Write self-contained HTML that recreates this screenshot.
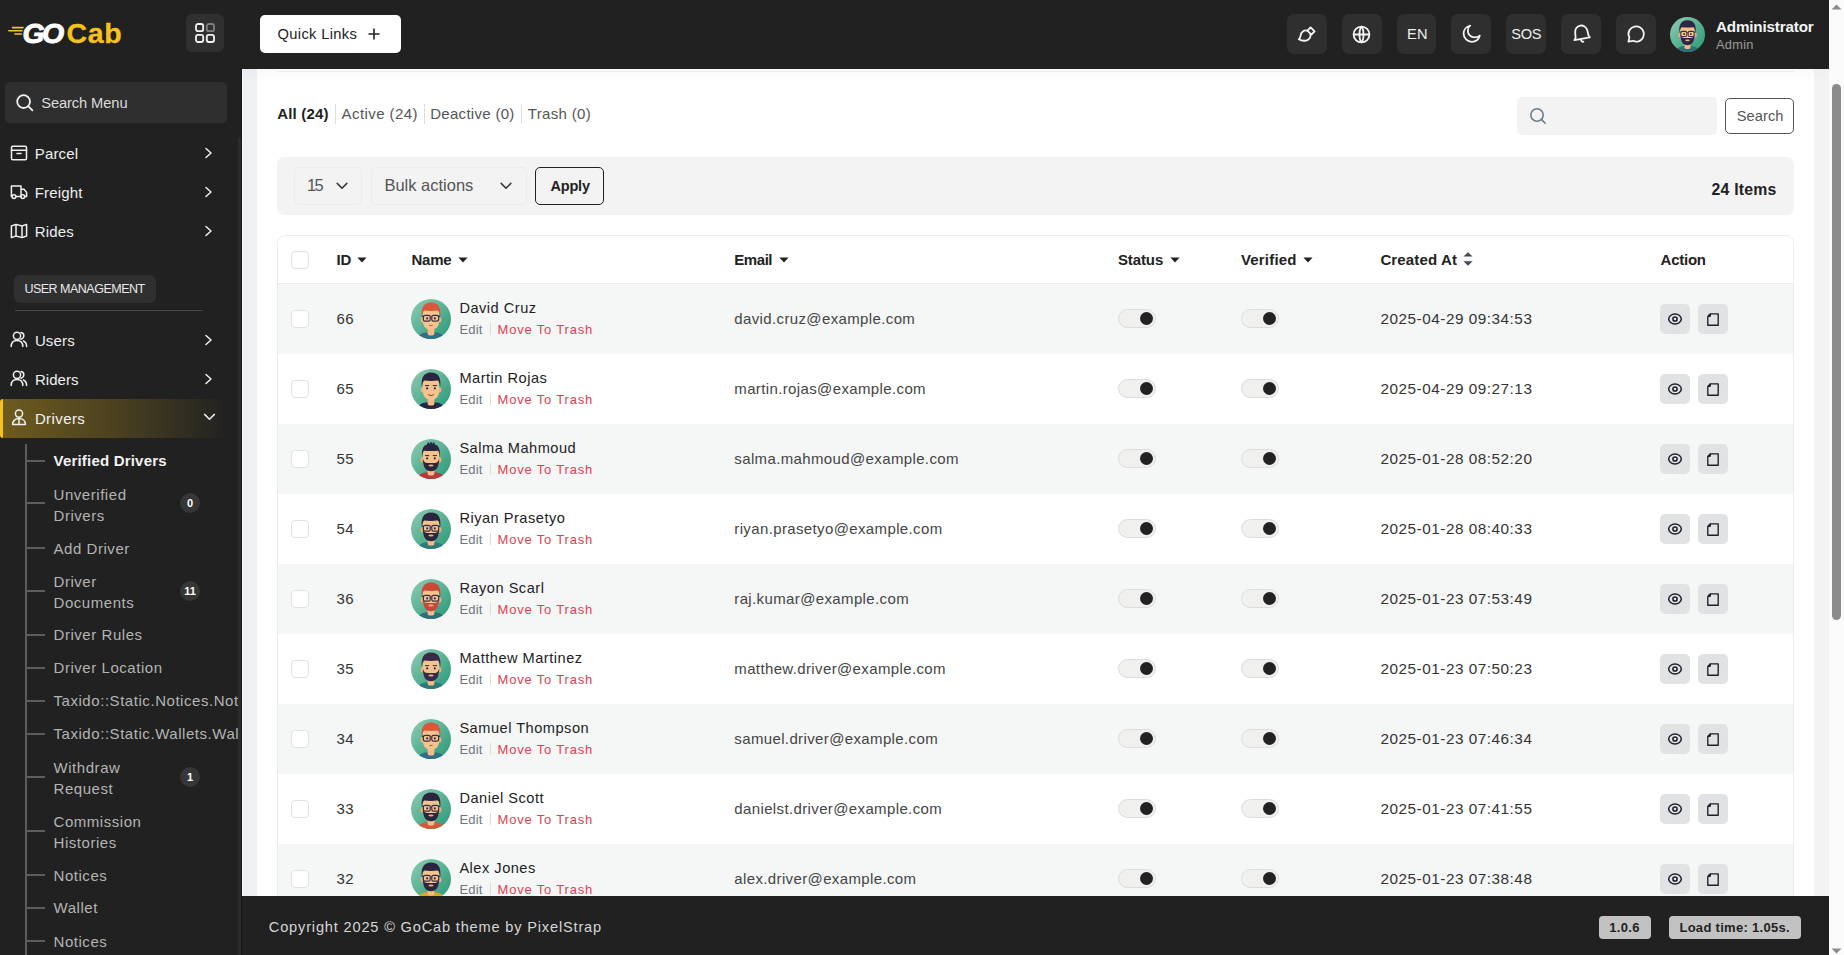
<!DOCTYPE html>
<html><head><meta charset="utf-8"><title>Drivers</title>
<style>
html,body{margin:0;padding:0;}
body{width:1844px;height:955px;overflow:hidden;position:relative;background:#fbfbfb;font-family:"Liberation Sans",sans-serif;}
.a{position:absolute;box-sizing:border-box;}
.t{position:absolute;white-space:nowrap;}
svg.a{overflow:visible;}
</style></head><body>

<div class="a" style="left:242px;top:69px;width:1587px;height:827px;background:#eef0f4"></div>
<div class="a" style="left:1814px;top:69px;width:15px;height:827px;background:#f3f3f3"></div>
<div class="a" style="left:257px;top:69px;width:1557px;height:827px;background:#ffffff"></div>
<div class="a" style="left:277px;top:71px;width:1517px;height:1px;background:#efefef"></div>
<div class="a" style="left:242px;top:69px;width:1px;height:827px;background:#f8f9fb"></div>
<div class="a" style="left:0px;top:0px;width:1829px;height:69px;background:#212121;box-shadow:0 3px 14px rgba(40,40,60,0.04)"></div>
<svg class="a" style="left:8px;top:22px;" width="120" height="24" viewBox="0 0 120 24" fill="none">
<g stroke="#f6c31c" stroke-width="1.6" stroke-linecap="round">
<line x1="4.5" y1="5.6" x2="15" y2="5.6"/><line x1="0.8" y1="8.8" x2="14" y2="8.8"/><line x1="7" y1="12" x2="13.5" y2="12"/>
</g></svg>
<div class="t" style="left:22.5px;top:18.78px;font-size:28.5px;line-height:28.5px;font-weight:700;color:#ffffff;letter-spacing:-2.6px;-webkit-text-stroke:0.9px #fff;"><i>GO</i></div>
<div class="t" style="left:66.5px;top:19.28px;font-size:28.5px;line-height:28.5px;font-weight:700;color:#f6c31c;letter-spacing:0.6px;-webkit-text-stroke:0.3px #f6c31c;">Cab</div>
<div class="a" style="left:186px;top:14px;width:38px;height:38px;background:#303030;border-radius:6px"></div>
<svg class="a" style="left:195px;top:23px;" width="20" height="20" viewBox="0 0 20 20" fill="none">
<rect x="1" y="1" width="7.2" height="7.2" rx="2" stroke="#f2f2f2" stroke-width="1.8"/>
<rect x="11.8" y="1" width="7.2" height="7.2" rx="2" stroke="#808080" stroke-width="1.8"/>
<rect x="1" y="11.8" width="7.2" height="7.2" rx="2" stroke="#f2f2f2" stroke-width="1.8"/>
<rect x="11.8" y="11.8" width="7.2" height="7.2" rx="2" stroke="#f2f2f2" stroke-width="1.8"/></svg>
<div class="a" style="left:260px;top:15px;width:141px;height:38px;background:#ffffff;border-radius:5px"></div>
<div class="t" style="left:277.5px;top:27.28px;font-size:14.7px;line-height:14.7px;font-weight:400;color:#222;letter-spacing:0.35px;">Quick Links</div>
<svg class="a" style="left:368px;top:28px;" width="12" height="12" viewBox="0 0 12 12" fill="none"><path d="M6 0.5V11.5M0.5 6H11.5" stroke="#222" stroke-width="1.6"/></svg>
<div class="a" style="left:1287px;top:14px;width:40px;height:40px;background:#2f2f2f;border-radius:7px"></div>
<div class="a" style="left:1342px;top:14px;width:40px;height:40px;background:#2f2f2f;border-radius:7px"></div>
<div class="a" style="left:1397px;top:14px;width:39px;height:40px;background:#2f2f2f;border-radius:7px"></div>
<div class="a" style="left:1451px;top:14px;width:40px;height:40px;background:#2f2f2f;border-radius:7px"></div>
<div class="a" style="left:1506px;top:14px;width:40px;height:40px;background:#2f2f2f;border-radius:7px"></div>
<div class="a" style="left:1561px;top:14px;width:40px;height:40px;background:#2f2f2f;border-radius:7px"></div>
<div class="a" style="left:1616px;top:14px;width:40px;height:40px;background:#2f2f2f;border-radius:7px"></div>
<svg class="a" style="left:1298px;top:25px;" width="20" height="18" viewBox="0 0 20 18" fill="none"><path d="M12.6 2.4 L16.6 6.4 L13.4 9.6 L9.4 5.6 Z" stroke="#f4f4f4" stroke-width="1.8" stroke-linecap="round" stroke-linejoin="round"/>
<path d="M9.6 5.8 C6 4.6 2.8 7 2.6 10.6 C2.4 12.4 1.6 13.6 0.8 14.2 C3 15.6 5.6 16 8 15.6 C11.4 14.8 13.2 11.6 12.4 9.2" stroke="#f4f4f4" stroke-width="1.8" stroke-linecap="round" stroke-linejoin="round"/></svg>
<svg class="a" style="left:1352px;top:25px;" width="19" height="19" viewBox="0 0 19 19" fill="none"><circle cx="9.5" cy="9.5" r="7.9" stroke="#f4f4f4" stroke-width="1.8" stroke-linecap="round" stroke-linejoin="round"/><path d="M1.8 9.5H17.2" stroke="#f4f4f4" stroke-width="1.8" stroke-linecap="round" stroke-linejoin="round"/>
<path d="M9.5 1.6 C6.8 4.6 6.8 14.4 9.5 17.4 C12.2 14.4 12.2 4.6 9.5 1.6Z" stroke="#f4f4f4" stroke-width="1.8" stroke-linecap="round" stroke-linejoin="round"/></svg>
<div class="t" style="left:1407px;top:26.99px;font-size:14.6px;line-height:14.6px;font-weight:400;color:#eeeeee;letter-spacing:0.2px;">EN</div>
<svg class="a" style="left:1462px;top:24px;" width="20" height="20" viewBox="0 0 20 20" fill="none"><path d="M8.2 1.6 C4.2 2.4 1.6 5.8 1.6 9.6 C1.6 14.2 5.4 17.8 9.8 17.8 C13.6 17.8 16.8 15.2 17.8 11.6 C16.4 12.8 14.6 13.4 12.6 13.4 C8.6 13.4 5.8 10.4 5.8 6.4 C5.8 4.6 6.6 2.8 8.2 1.6Z" stroke="#f4f4f4" stroke-width="1.8" stroke-linecap="round" stroke-linejoin="round"/></svg>
<div class="t" style="left:1511.3px;top:26.99px;font-size:14.6px;line-height:14.6px;font-weight:400;color:#eeeeee;letter-spacing:-0.3px;">SOS</div>
<svg class="a" style="left:1572px;top:24px;" width="20" height="20" viewBox="0 0 20 20" fill="none"><path d="M2.4 16.2 L17.8 13.4 L16.6 11.8 L15.4 6.8 C14.6 3.2 11.4 1 8.2 1.6 C5 2.2 2.8 5.2 3.2 8.6 L3.6 13.8 Z" stroke="#f4f4f4" stroke-width="1.8" stroke-linecap="round" stroke-linejoin="round"/>
<path d="M9 16 C9.2 17.6 10.4 18 11.4 17.6" stroke="#f4f4f4" stroke-width="1.8" stroke-linecap="round" stroke-linejoin="round"/></svg>
<svg class="a" style="left:1626px;top:24px;" width="20" height="20" viewBox="0 0 20 20" fill="none"><path d="M2.4 17.6 L3.4 13.4 C2.2 11.2 2.2 8.4 3.6 6 C5.8 2.4 10.6 1.2 14.2 3.4 C17.8 5.6 19 10.4 16.8 14 C14.8 17.2 10.8 18.6 7.2 16.8 Z" stroke="#f4f4f4" stroke-width="1.8" stroke-linecap="round" stroke-linejoin="round"/></svg>
<svg class="a" style="left:1670.0px;top:17.0px;" width="35.0" height="35.0" viewBox="0 0 40 40" fill="none"><defs><linearGradient id="hav" x1="0" y1="0" x2="1" y2="1"><stop offset="0" stop-color="#8fccb2"/><stop offset="1" stop-color="#279877"/></linearGradient>
<clipPath id="chav"><circle cx="20" cy="20" r="20"/></clipPath></defs>
<circle cx="20" cy="20" r="20" fill="url(#hav)"/>
<g clip-path="url(#chav)">
<path d="M5.5 42 C6.5 35.5 11 33.6 16.5 33.2 L23.5 33.2 C29 33.6 33.5 35.5 34.5 42Z" fill="#2c6e7a"/>
<rect x="16.6" y="25" width="6.8" height="11.6" rx="2" fill="#f3bb86"/>
<ellipse cx="11.4" cy="20.8" rx="1.9" ry="2.7" fill="#eeb07a"/><ellipse cx="28.6" cy="20.8" rx="1.9" ry="2.7" fill="#eeb07a"/>
<path d="M12 12.5 C12 8.5 15.5 7 20 7 C24.5 7 28 8.5 28 12.5 L28 22.5 C28 27.8 24.5 30.8 20 30.8 C15.5 30.8 12 27.8 12 22.5 Z" fill="#f7c38d"/>
<path d="M11.8 19.5 C11.8 28.5 15 32.2 20 32.2 C25 32.2 28.2 28.5 28.2 19.5 C27.4 22.8 25.8 24 23.6 24 L16.4 24 C14.2 24 12.6 22.8 11.8 19.5Z" fill="#2f2743"/><ellipse cx="20" cy="26.6" rx="2.6" ry="1" fill="#f0b27e"/><path d="M10.8 18.2 C9.8 9 12.6 4 19.6 3.6 C27.2 3.4 30.4 8.4 29.2 18.2 C28.6 14.4 27.8 12.4 26.8 11.6 C22.6 12.2 17.4 12.2 13.2 11.6 C12.2 12.4 11.4 14.4 10.8 18.2Z" fill="#2f2743"/><path d="M14.4 16.6 H17.8 M22.2 16.6 H25.6" stroke="#2f2743" stroke-width="1" stroke-linecap="round"/><circle cx="16.2" cy="19.4" r="1.05" fill="#2d2a45"/><circle cx="23.8" cy="19.4" r="1.05" fill="#2d2a45"/><g stroke="#3a3048" stroke-width="1.2" fill="none"><rect x="12.4" y="16.4" width="6.8" height="5.8" rx="1.6"/><rect x="20.8" y="16.4" width="6.8" height="5.8" rx="1.6"/><path d="M19.2 18H20.8M11 17.4H12.4M27.6 17.4H29"/></g></g></svg>
<div class="t" style="left:1716px;top:19.02px;font-size:15.2px;line-height:15.2px;font-weight:700;color:#f5f5f5;letter-spacing:-0.15px;">Administrator</div>
<div class="t" style="left:1716px;top:39.13px;font-size:12.8px;line-height:12.8px;font-weight:400;color:#9c9c9c;letter-spacing:0.3px;">Admin</div>
<div class="a" style="left:0px;top:69px;width:242px;height:886px;background:#212121"></div>
<div class="a" style="left:238px;top:138px;width:4px;height:817px;background:#2c2c2c"></div>
<div class="a" style="left:241px;top:69px;width:1px;height:886px;background:#161616"></div>
<div class="a" style="left:5px;top:82px;width:222px;height:41px;background:#2f2f2f;border-radius:5px"></div>
<svg class="a" style="left:16px;top:94px;" width="18" height="18" viewBox="0 0 18 18" fill="none"><circle cx="7.6" cy="7.6" r="6.4" stroke="#f4f4f4" stroke-width="1.8" stroke-linecap="round" stroke-linejoin="round"/><path d="M12.4 12.4 L16.4 16.4" stroke="#f4f4f4" stroke-width="1.8" stroke-linecap="round" stroke-linejoin="round"/></svg>
<div class="t" style="left:41.2px;top:96.28px;font-size:14.7px;line-height:14.7px;font-weight:400;color:#dcdcdc;letter-spacing:-0.1px;">Search Menu</div>
<svg class="a" style="left:10px;top:145px;" width="18" height="16" viewBox="0 0 18 16" fill="none"><rect x="1.5" y="1.2" width="15" height="13.6" rx="1.4" stroke="#f0f0f0" stroke-width="1.5" stroke-linecap="round" stroke-linejoin="round"/><path d="M1.5 5.2H16.5M7 8.6H11" stroke="#f0f0f0" stroke-width="1.5" stroke-linecap="round" stroke-linejoin="round"/></svg>
<div class="t" style="left:34.8px;top:146.34px;font-size:15px;line-height:15px;font-weight:400;color:#efefef;letter-spacing:0.15px;">Parcel</div>
<svg class="a" style="left:204px;top:147px;" width="9" height="12" viewBox="0 0 9 12" fill="none"><path d="M2 1.5 L7 6 L2 10.5" stroke="#f0f0f0" stroke-width="1.5" stroke-linecap="round" stroke-linejoin="round" stroke-width="1.7"/></svg>
<svg class="a" style="left:10px;top:184px;" width="18" height="16" viewBox="0 0 18 16" fill="none"><path d="M1.4 12.4 V2 H11 V12.4 H6.2 M11 5.2 H14 L16.6 8.4 V12.4 H15" stroke="#f0f0f0" stroke-width="1.5" stroke-linecap="round" stroke-linejoin="round"/><circle cx="4" cy="12.6" r="1.9" stroke="#f0f0f0" stroke-width="1.5" stroke-linecap="round" stroke-linejoin="round"/><circle cx="12.8" cy="12.6" r="1.9" stroke="#f0f0f0" stroke-width="1.5" stroke-linecap="round" stroke-linejoin="round"/></svg>
<div class="t" style="left:34.8px;top:185.14px;font-size:15px;line-height:15px;font-weight:400;color:#efefef;letter-spacing:0.15px;">Freight</div>
<svg class="a" style="left:204px;top:186px;" width="9" height="12" viewBox="0 0 9 12" fill="none"><path d="M2 1.5 L7 6 L2 10.5" stroke="#f0f0f0" stroke-width="1.5" stroke-linecap="round" stroke-linejoin="round" stroke-width="1.7"/></svg>
<svg class="a" style="left:10px;top:223px;" width="18" height="16" viewBox="0 0 18 16" fill="none"><path d="M1.4 3 L6 1.4 L12 3 L16.6 1.4 V13 L12 14.6 L6 13 L1.4 14.6 Z M6 1.4 V13 M12 3 V14.6" stroke="#f0f0f0" stroke-width="1.5" stroke-linecap="round" stroke-linejoin="round"/></svg>
<div class="t" style="left:34.8px;top:224.24px;font-size:15px;line-height:15px;font-weight:400;color:#efefef;letter-spacing:0.15px;">Rides</div>
<svg class="a" style="left:204px;top:225px;" width="9" height="12" viewBox="0 0 9 12" fill="none"><path d="M2 1.5 L7 6 L2 10.5" stroke="#f0f0f0" stroke-width="1.5" stroke-linecap="round" stroke-linejoin="round" stroke-width="1.7"/></svg>
<div class="a" style="left:14px;top:275px;width:142px;height:28px;background:#303030;border-radius:6px"></div>
<div class="t" style="left:24.4px;top:283.17px;font-size:12.5px;line-height:12.5px;font-weight:400;color:#eaeaea;letter-spacing:-0.5px;">USER MANAGEMENT</div>
<div class="a" style="left:15px;top:310px;width:188px;height:1px;background:#464646"></div>
<svg class="a" style="left:10px;top:331px;" width="18" height="17" viewBox="0 0 18 17" fill="none"><circle cx="7" cy="4.8" r="3.6" stroke="#f0f0f0" stroke-width="1.5" stroke-linecap="round" stroke-linejoin="round"/><path d="M1.2 15.6 C1.2 11.6 3.8 9.6 7 9.6 C10.2 9.6 12.8 11.6 12.8 15.6" stroke="#f0f0f0" stroke-width="1.5" stroke-linecap="round" stroke-linejoin="round"/><path d="M11 1.4 C13 1.8 14 3.4 13.8 5 C13.6 6.6 12.6 7.8 11 8.2 M13.4 10 C15.6 10.8 16.6 12.8 16.6 15.6" stroke="#f0f0f0" stroke-width="1.5" stroke-linecap="round" stroke-linejoin="round"/></svg>
<div class="t" style="left:34.9px;top:333.14px;font-size:15px;line-height:15px;font-weight:400;color:#efefef;letter-spacing:0.15px;">Users</div>
<svg class="a" style="left:204px;top:334px;" width="9" height="12" viewBox="0 0 9 12" fill="none"><path d="M2 1.5 L7 6 L2 10.5" stroke="#f0f0f0" stroke-width="1.5" stroke-linecap="round" stroke-linejoin="round" stroke-width="1.7"/></svg>
<svg class="a" style="left:10px;top:370px;" width="18" height="17" viewBox="0 0 18 17" fill="none"><circle cx="7" cy="4.8" r="3.6" stroke="#f0f0f0" stroke-width="1.5" stroke-linecap="round" stroke-linejoin="round"/><path d="M1.2 15.6 C1.2 11.6 3.8 9.6 7 9.6 C10.2 9.6 12.8 11.6 12.8 15.6" stroke="#f0f0f0" stroke-width="1.5" stroke-linecap="round" stroke-linejoin="round"/><path d="M11 1.4 C13 1.8 14 3.4 13.8 5 C13.6 6.6 12.6 7.8 11 8.2 M13.4 10 C15.6 10.8 16.6 12.8 16.6 15.6" stroke="#f0f0f0" stroke-width="1.5" stroke-linecap="round" stroke-linejoin="round"/></svg>
<div class="t" style="left:34.9px;top:372.24px;font-size:15px;line-height:15px;font-weight:400;color:#efefef;letter-spacing:0.05px;">Riders</div>
<svg class="a" style="left:204px;top:373px;" width="9" height="12" viewBox="0 0 9 12" fill="none"><path d="M2 1.5 L7 6 L2 10.5" stroke="#f0f0f0" stroke-width="1.5" stroke-linecap="round" stroke-linejoin="round" stroke-width="1.7"/></svg>
<div class="a" style="left:0px;top:399px;width:228px;height:39px;background:linear-gradient(90deg,rgba(246,195,28,0.36) 0%,rgba(246,195,28,0.20) 50%,rgba(246,195,28,0.0) 100%);border-radius:5px 0 0 5px"></div>
<div class="a" style="left:0px;top:399px;width:3px;height:39px;background:#f6c31c;border-radius:3px 0 0 3px"></div>
<svg class="a" style="left:11px;top:409px;" width="16" height="17" viewBox="0 0 16 17" fill="none"><circle cx="8" cy="4.6" r="3.6" stroke="#f0f0f0" stroke-width="1.5" stroke-linecap="round" stroke-linejoin="round"/><path d="M1.6 15.6 C1.6 11.8 4.4 9.6 8 9.6 C11.6 9.6 14.4 11.8 14.4 15.6 Z M8 9.6 V15.6" stroke="#f0f0f0" stroke-width="1.5" stroke-linecap="round" stroke-linejoin="round"/></svg>
<div class="t" style="left:34.9px;top:411.04px;font-size:15px;line-height:15px;font-weight:400;color:#f4f4f4;letter-spacing:0.4px;">Drivers</div>
<svg class="a" style="left:203px;top:412px;" width="13" height="10" viewBox="0 0 13 10" fill="none"><path d="M1.6 2.4 L6.5 7.2 L11.4 2.4" stroke="#f0f0f0" stroke-width="1.5" stroke-linecap="round" stroke-linejoin="round" stroke-width="1.7"/></svg>
<div class="a" style="left:25px;top:444px;width:2px;height:511px;background:#5c5c5c"></div>
<div class="a" style="left:0;top:440px;width:238px;height:515px;overflow:hidden">
<div class="a" style="left:25px;top:19.6px;width:20px;height:2px;background:#5c5c5c"></div>
<div class="t" style="left:53.5px;top:13.34px;font-size:15px;line-height:15px;font-weight:700;color:#f2f2f2;letter-spacing:0.2px">Verified Drivers</div>
<div class="a" style="left:25px;top:62.4px;width:20px;height:2px;background:#5c5c5c"></div>
<div class="t" style="left:53.5px;top:46.64px;font-size:15px;line-height:15px;color:#b4b4b4;letter-spacing:0.55px">Unverified</div>
<div class="t" style="left:53.5px;top:67.64px;font-size:15px;line-height:15px;color:#b4b4b4;letter-spacing:0.55px">Drivers</div>
<div class="a" style="left:180px;top:53.4px;width:20px;height:20px;border-radius:50%;background:#363636;color:#fff;font-size:11px;font-weight:700;line-height:20px;text-align:center">0</div>
<div class="a" style="left:25px;top:106.9px;width:20px;height:2px;background:#5c5c5c"></div>
<div class="t" style="left:53.5px;top:100.64px;font-size:15px;line-height:15px;color:#b4b4b4;letter-spacing:0.55px">Add Driver</div>
<div class="a" style="left:25px;top:149.6px;width:20px;height:2px;background:#5c5c5c"></div>
<div class="t" style="left:53.5px;top:133.84px;font-size:15px;line-height:15px;color:#b4b4b4;letter-spacing:0.55px">Driver</div>
<div class="t" style="left:53.5px;top:154.84px;font-size:15px;line-height:15px;color:#b4b4b4;letter-spacing:0.55px">Documents</div>
<div class="a" style="left:180px;top:140.6px;width:20px;height:20px;border-radius:50%;background:#363636;color:#fff;font-size:11px;font-weight:700;line-height:20px;text-align:center">11</div>
<div class="a" style="left:25px;top:193.6px;width:20px;height:2px;background:#5c5c5c"></div>
<div class="t" style="left:53.5px;top:187.34px;font-size:15px;line-height:15px;color:#b4b4b4;letter-spacing:0.55px">Driver Rules</div>
<div class="a" style="left:25px;top:226.7px;width:20px;height:2px;background:#5c5c5c"></div>
<div class="t" style="left:53.5px;top:220.44px;font-size:15px;line-height:15px;color:#b4b4b4;letter-spacing:0.55px">Driver Location</div>
<div class="a" style="left:25px;top:259.7px;width:20px;height:2px;background:#5c5c5c"></div>
<div class="t" style="left:53.5px;top:253.44px;font-size:15px;line-height:15px;color:#b4b4b4;letter-spacing:0.55px">Taxido::Static.Notices.Notices</div>
<div class="a" style="left:25px;top:292.6px;width:20px;height:2px;background:#5c5c5c"></div>
<div class="t" style="left:53.5px;top:286.34px;font-size:15px;line-height:15px;color:#b4b4b4;letter-spacing:0.55px">Taxido::Static.Wallets.Wallet</div>
<div class="a" style="left:25px;top:335.7px;width:20px;height:2px;background:#5c5c5c"></div>
<div class="t" style="left:53.5px;top:319.94px;font-size:15px;line-height:15px;color:#b4b4b4;letter-spacing:0.55px">Withdraw</div>
<div class="t" style="left:53.5px;top:340.94px;font-size:15px;line-height:15px;color:#b4b4b4;letter-spacing:0.55px">Request</div>
<div class="a" style="left:180px;top:326.7px;width:20px;height:20px;border-radius:50%;background:#363636;color:#fff;font-size:11px;font-weight:700;line-height:20px;text-align:center">1</div>
<div class="a" style="left:25px;top:389.6px;width:20px;height:2px;background:#5c5c5c"></div>
<div class="t" style="left:53.5px;top:373.84px;font-size:15px;line-height:15px;color:#b4b4b4;letter-spacing:0.55px">Commission</div>
<div class="t" style="left:53.5px;top:394.84px;font-size:15px;line-height:15px;color:#b4b4b4;letter-spacing:0.55px">Histories</div>
<div class="a" style="left:25px;top:433.8px;width:20px;height:2px;background:#5c5c5c"></div>
<div class="t" style="left:53.5px;top:427.54px;font-size:15px;line-height:15px;color:#b4b4b4;letter-spacing:0.55px">Notices</div>
<div class="a" style="left:25px;top:466.6px;width:20px;height:2px;background:#5c5c5c"></div>
<div class="t" style="left:53.5px;top:460.34px;font-size:15px;line-height:15px;color:#b4b4b4;letter-spacing:0.55px">Wallet</div>
<div class="a" style="left:25px;top:499.8px;width:20px;height:2px;background:#5c5c5c"></div>
<div class="t" style="left:53.5px;top:493.54px;font-size:15px;line-height:15px;color:#b4b4b4;letter-spacing:0.55px">Notices</div>
</div>
<div class="t" style="left:277.2px;top:106.44px;font-size:15px;line-height:15px;font-weight:700;color:#222;letter-spacing:0.2px;">All (24)</div>
<div class="a" style="left:335px;top:104px;width:1px;height:20px;background:#dedede"></div>
<div class="t" style="left:341.6px;top:106.44px;font-size:15px;line-height:15px;font-weight:400;color:#555;letter-spacing:0.42px;">Active (24)</div>
<div class="a" style="left:424px;top:104px;width:1px;height:20px;background:#dedede"></div>
<div class="t" style="left:430.2px;top:106.44px;font-size:15px;line-height:15px;font-weight:400;color:#555;letter-spacing:0.3px;">Deactive (0)</div>
<div class="a" style="left:521px;top:104px;width:1px;height:20px;background:#dedede"></div>
<div class="t" style="left:527.7px;top:106.44px;font-size:15px;line-height:15px;font-weight:400;color:#555;letter-spacing:0.35px;">Trash (0)</div>
<div class="a" style="left:1517px;top:97px;width:200px;height:38px;background:#f3f3f3;border-radius:5px"></div>
<svg class="a" style="left:1529px;top:107px;" width="18" height="18" viewBox="0 0 18 18" fill="none"><circle cx="8" cy="8" r="6.2" stroke="#6f7d8c" stroke-width="1.6"/><path d="M12.6 12.6 L16.2 16.2" stroke="#6f7d8c" stroke-width="1.6" stroke-linecap="round"/></svg>
<div class="a" style="left:1725px;top:98px;width:69px;height:36px;border:1px solid #555;border-radius:5px;background:#fff"></div>
<div class="t" style="left:1736.7px;top:109.09px;font-size:14.6px;line-height:14.6px;font-weight:400;color:#555;letter-spacing:0.1px;">Search</div>
<div class="a" style="left:277px;top:157px;width:1517px;height:58px;background:#f3f3f3;border-radius:7px"></div>
<div class="a" style="left:294px;top:167px;width:68px;height:38px;border:1px solid #ececec;border-radius:5px"></div>
<div class="t" style="left:307px;top:176.65px;font-size:16.5px;line-height:16.5px;font-weight:400;color:#555;letter-spacing:-1.6px;">15</div>
<svg class="a" style="left:336px;top:182px;" width="12" height="8" viewBox="0 0 12 8" fill="none"><path d="M1.2 1.4 L6 6.2 L10.8 1.4" stroke="#333" stroke-width="1.5" stroke-linecap="round" stroke-linejoin="round"/></svg>
<div class="a" style="left:371px;top:167px;width:156px;height:38px;border:1px solid #ececec;border-radius:5px"></div>
<div class="t" style="left:384.4px;top:176.65px;font-size:16.5px;line-height:16.5px;font-weight:400;color:#555;">Bulk actions</div>
<svg class="a" style="left:500px;top:182px;" width="12" height="8" viewBox="0 0 12 8" fill="none"><path d="M1.2 1.4 L6 6.2 L10.8 1.4" stroke="#333" stroke-width="1.5" stroke-linecap="round" stroke-linejoin="round"/></svg>
<div class="a" style="left:535px;top:167px;width:69px;height:38px;border:1px solid #222;border-radius:5px"></div>
<div class="t" style="left:550.5px;top:178.51px;font-size:14.5px;line-height:14.5px;font-weight:700;color:#222;letter-spacing:-0.2px;">Apply</div>
<div class="t" style="left:1711.6px;top:181.74px;font-size:15.8px;line-height:15.8px;font-weight:700;color:#222;letter-spacing:0.2px;">24 Items</div>
<div class="a" style="left:277px;top:235px;width:1517px;height:700px;border:1px solid #ececec;border-radius:8px;background:#fff"></div>
<div class="a" style="left:278px;top:283px;width:1515px;height:1px;background:#eaeaea"></div>
<div class="a" style="left:291px;top:251px;width:18px;height:18px;border:1px solid #dfe2e6;border-radius:4px;background:#fff"></div>
<div class="t" style="left:336.4px;top:252.04px;font-size:15px;line-height:15px;font-weight:700;color:#222;">ID</div>
<svg class="a" style="left:357px;top:257px;" width="10" height="6" viewBox="0 0 10 6" fill="none"><path d="M0.4 0.6 H9.6 L5 5.6Z" fill="#222"/></svg>
<div class="t" style="left:411.4px;top:252.04px;font-size:15px;line-height:15px;font-weight:700;color:#222;letter-spacing:-0.2px;">Name</div>
<svg class="a" style="left:458px;top:257px;" width="10" height="6" viewBox="0 0 10 6" fill="none"><path d="M0.4 0.6 H9.6 L5 5.6Z" fill="#222"/></svg>
<div class="t" style="left:734.3px;top:252.04px;font-size:15px;line-height:15px;font-weight:700;color:#222;letter-spacing:-0.45px;">Email</div>
<svg class="a" style="left:779px;top:257px;" width="10" height="6" viewBox="0 0 10 6" fill="none"><path d="M0.4 0.6 H9.6 L5 5.6Z" fill="#222"/></svg>
<div class="t" style="left:1117.9px;top:252.04px;font-size:15px;line-height:15px;font-weight:700;color:#222;letter-spacing:-0.1px;">Status</div>
<svg class="a" style="left:1170px;top:257px;" width="10" height="6" viewBox="0 0 10 6" fill="none"><path d="M0.4 0.6 H9.6 L5 5.6Z" fill="#222"/></svg>
<div class="t" style="left:1240.9px;top:252.04px;font-size:15px;line-height:15px;font-weight:700;color:#222;letter-spacing:0.2px;">Verified</div>
<svg class="a" style="left:1303px;top:257px;" width="10" height="6" viewBox="0 0 10 6" fill="none"><path d="M0.4 0.6 H9.6 L5 5.6Z" fill="#222"/></svg>
<div class="t" style="left:1380.4px;top:252.04px;font-size:15px;line-height:15px;font-weight:700;color:#222;letter-spacing:0.15px;">Created At</div>
<svg class="a" style="left:1463px;top:252px;" width="10" height="14" viewBox="0 0 10 14" fill="none"><path d="M0.4 4.6 L5 0.2 L9.6 4.6Z M0.4 9.2 H9.6 L5 13.8Z" fill="#454a54"/></svg>
<div class="t" style="left:1660.6px;top:252.04px;font-size:15px;line-height:15px;font-weight:700;color:#222;letter-spacing:-0.25px;">Action</div>
<div class="a" style="left:278px;top:284px;width:1515px;height:70px;background:#f5f7f7"></div>
<div class="a" style="left:291px;top:310px;width:18px;height:18px;border:1px solid #dfe2e6;border-radius:4px;background:#fff"></div>
<div class="t" style="left:336.4px;top:311.44px;font-size:15px;line-height:15px;font-weight:400;color:#333;letter-spacing:0.4px;">66</div>
<svg class="a" style="left:411px;top:299px;" width="40" height="40" viewBox="0 0 40 40" fill="none"><defs><linearGradient id="a0" x1="0" y1="0" x2="1" y2="1"><stop offset="0" stop-color="#8fccb2"/><stop offset="1" stop-color="#279877"/></linearGradient>
<clipPath id="ca0"><circle cx="20" cy="20" r="20"/></clipPath></defs>
<circle cx="20" cy="20" r="20" fill="url(#a0)"/>
<g clip-path="url(#ca0)">
<path d="M5.5 42 C6.5 35.5 11 33.6 16.5 33.2 L23.5 33.2 C29 33.6 33.5 35.5 34.5 42Z" fill="#2e6f8a"/>
<rect x="16.6" y="25" width="6.8" height="11.6" rx="2" fill="#f3bb86"/>
<ellipse cx="11.4" cy="20.8" rx="1.9" ry="2.7" fill="#eeb07a"/><ellipse cx="28.6" cy="20.8" rx="1.9" ry="2.7" fill="#eeb07a"/>
<path d="M12 12.5 C12 8.5 15.5 7 20 7 C24.5 7 28 8.5 28 12.5 L28 22.5 C28 27.8 24.5 30.8 20 30.8 C15.5 30.8 12 27.8 12 22.5 Z" fill="#f7c38d"/>
<path d="M18.4 26.4 H21.6" stroke="#8a5a48" stroke-width="0.9"/><path d="M10.8 18.2 C9.8 9 12.6 4 19.6 3.6 C27.2 3.4 30.4 8.4 29.2 18.2 C28.6 14.4 27.8 12.4 26.8 11.6 C22.6 12.2 17.4 12.2 13.2 11.6 C12.2 12.4 11.4 14.4 10.8 18.2Z" fill="#d9573a"/><path d="M14.4 16.6 H17.8 M22.2 16.6 H25.6" stroke="#d9573a" stroke-width="1" stroke-linecap="round"/><circle cx="16.2" cy="19.4" r="1.05" fill="#2d2a45"/><circle cx="23.8" cy="19.4" r="1.05" fill="#2d2a45"/><g stroke="#3a3048" stroke-width="1.2" fill="none"><rect x="12.4" y="16.4" width="6.8" height="5.8" rx="1.6"/><rect x="20.8" y="16.4" width="6.8" height="5.8" rx="1.6"/><path d="M19.2 18H20.8M11 17.4H12.4M27.6 17.4H29"/></g></g></svg>
<div class="t" style="left:459.4px;top:300.59px;font-size:14.6px;line-height:14.6px;font-weight:400;color:#222;letter-spacing:0.5px;">David Cruz</div>
<div class="t" style="left:459.4px;top:323.30px;font-size:13px;line-height:13px;font-weight:400;color:#6c7480;letter-spacing:0.2px;">Edit</div>
<div class="a" style="left:490px;top:323px;width:1px;height:12px;background:#dcdcdc"></div>
<div class="t" style="left:497.6px;top:323.30px;font-size:13px;line-height:13px;font-weight:400;color:#e0414f;letter-spacing:0.8px;">Move To Trash</div>
<div class="t" style="left:734.3px;top:310.64px;font-size:15px;line-height:15px;font-weight:400;color:#444;letter-spacing:0.37px;">david.cruz@example.com</div>
<div class="a" style="left:1118px;top:309px;width:38px;height:19px;background:#f0f0ef;border:1px solid #dcdcdc;border-radius:10px"></div>
<div class="a" style="left:1140px;top:312px;width:13px;height:13px;background:#222;border-radius:50%"></div>
<div class="a" style="left:1241px;top:309px;width:38px;height:19px;background:#f0f0ef;border:1px solid #dcdcdc;border-radius:10px"></div>
<div class="a" style="left:1263px;top:312px;width:13px;height:13px;background:#222;border-radius:50%"></div>
<div class="t" style="left:1380.5px;top:310.70px;font-size:15.3px;line-height:15.3px;font-weight:400;color:#333;letter-spacing:0.52px;">2025-04-29 09:34:53</div>
<div class="a" style="left:1660px;top:304px;width:30px;height:30px;background:#e1e2e4;border-radius:5px"></div>
<svg class="a" style="left:1668px;top:313px;" width="14" height="12" viewBox="0 0 14 12" fill="none"><ellipse cx="7" cy="6" rx="6.3" ry="5" stroke="#1e1e2a" stroke-width="1.5"/><circle cx="7" cy="6" r="2.1" stroke="#1e1e2a" stroke-width="1.5"/></svg>
<div class="a" style="left:1698px;top:304px;width:30px;height:30px;background:#e1e2e4;border-radius:5px"></div>
<svg class="a" style="left:1707px;top:313px;" width="12" height="13" viewBox="0 0 12 13" fill="none"><path d="M3.4 0.8 H11.2 V12.2 H0.8 V3.4 Z" stroke="#1e1e2a" stroke-width="1.35" stroke-linejoin="round"/><path d="M3.4 0.8 V3.4 H0.8" fill="#1e1e2a" stroke="#1e1e2a" stroke-width="1"/></svg>
<div class="a" style="left:291px;top:380px;width:18px;height:18px;border:1px solid #dfe2e6;border-radius:4px;background:#fff"></div>
<div class="t" style="left:336.4px;top:381.44px;font-size:15px;line-height:15px;font-weight:400;color:#333;letter-spacing:0.4px;">65</div>
<svg class="a" style="left:411px;top:369px;" width="40" height="40" viewBox="0 0 40 40" fill="none"><defs><linearGradient id="a1" x1="0" y1="0" x2="1" y2="1"><stop offset="0" stop-color="#8fccb2"/><stop offset="1" stop-color="#279877"/></linearGradient>
<clipPath id="ca1"><circle cx="20" cy="20" r="20"/></clipPath></defs>
<circle cx="20" cy="20" r="20" fill="url(#a1)"/>
<g clip-path="url(#ca1)">
<path d="M5.5 42 C6.5 35.5 11 33.6 16.5 33.2 L23.5 33.2 C29 33.6 33.5 35.5 34.5 42Z" fill="#23284a"/>
<rect x="16.6" y="25" width="6.8" height="11.6" rx="2" fill="#f3bb86"/>
<ellipse cx="11.4" cy="20.8" rx="1.9" ry="2.7" fill="#eeb07a"/><ellipse cx="28.6" cy="20.8" rx="1.9" ry="2.7" fill="#eeb07a"/>
<path d="M12 12.5 C12 8.5 15.5 7 20 7 C24.5 7 28 8.5 28 12.5 L28 22.5 C28 27.8 24.5 30.8 20 30.8 C15.5 30.8 12 27.8 12 22.5 Z" fill="#f7c38d"/>
<path d="M17.2 25.4 C18.6 26.8 21.4 26.8 22.8 25.4" stroke="#5b3a3a" stroke-width="0.9" fill="none"/><path d="M10.8 18.2 C9.8 9 12.6 4 19.6 3.6 C27.2 3.4 30.4 8.4 29.2 18.2 C28.6 14.4 27.8 12.4 26.8 11.6 C22.6 12.2 17.4 12.2 13.2 11.6 C12.2 12.4 11.4 14.4 10.8 18.2Z" fill="#2b2540"/><path d="M14.4 16.6 H17.8 M22.2 16.6 H25.6" stroke="#2b2540" stroke-width="1" stroke-linecap="round"/><circle cx="16.2" cy="19.4" r="1.05" fill="#2d2a45"/><circle cx="23.8" cy="19.4" r="1.05" fill="#2d2a45"/></g></svg>
<div class="t" style="left:459.4px;top:370.59px;font-size:14.6px;line-height:14.6px;font-weight:400;color:#222;letter-spacing:0.5px;">Martin Rojas</div>
<div class="t" style="left:459.4px;top:393.30px;font-size:13px;line-height:13px;font-weight:400;color:#6c7480;letter-spacing:0.2px;">Edit</div>
<div class="a" style="left:490px;top:393px;width:1px;height:12px;background:#dcdcdc"></div>
<div class="t" style="left:497.6px;top:393.30px;font-size:13px;line-height:13px;font-weight:400;color:#e0414f;letter-spacing:0.8px;">Move To Trash</div>
<div class="t" style="left:734.3px;top:380.64px;font-size:15px;line-height:15px;font-weight:400;color:#444;letter-spacing:0.37px;">martin.rojas@example.com</div>
<div class="a" style="left:1118px;top:379px;width:38px;height:19px;background:#f0f0ef;border:1px solid #dcdcdc;border-radius:10px"></div>
<div class="a" style="left:1140px;top:382px;width:13px;height:13px;background:#222;border-radius:50%"></div>
<div class="a" style="left:1241px;top:379px;width:38px;height:19px;background:#f0f0ef;border:1px solid #dcdcdc;border-radius:10px"></div>
<div class="a" style="left:1263px;top:382px;width:13px;height:13px;background:#222;border-radius:50%"></div>
<div class="t" style="left:1380.5px;top:380.70px;font-size:15.3px;line-height:15.3px;font-weight:400;color:#333;letter-spacing:0.52px;">2025-04-29 09:27:13</div>
<div class="a" style="left:1660px;top:374px;width:30px;height:30px;background:#e1e2e4;border-radius:5px"></div>
<svg class="a" style="left:1668px;top:383px;" width="14" height="12" viewBox="0 0 14 12" fill="none"><ellipse cx="7" cy="6" rx="6.3" ry="5" stroke="#1e1e2a" stroke-width="1.5"/><circle cx="7" cy="6" r="2.1" stroke="#1e1e2a" stroke-width="1.5"/></svg>
<div class="a" style="left:1698px;top:374px;width:30px;height:30px;background:#e1e2e4;border-radius:5px"></div>
<svg class="a" style="left:1707px;top:383px;" width="12" height="13" viewBox="0 0 12 13" fill="none"><path d="M3.4 0.8 H11.2 V12.2 H0.8 V3.4 Z" stroke="#1e1e2a" stroke-width="1.35" stroke-linejoin="round"/><path d="M3.4 0.8 V3.4 H0.8" fill="#1e1e2a" stroke="#1e1e2a" stroke-width="1"/></svg>
<div class="a" style="left:278px;top:424px;width:1515px;height:70px;background:#f5f7f7"></div>
<div class="a" style="left:291px;top:450px;width:18px;height:18px;border:1px solid #dfe2e6;border-radius:4px;background:#fff"></div>
<div class="t" style="left:336.4px;top:451.44px;font-size:15px;line-height:15px;font-weight:400;color:#333;letter-spacing:0.4px;">55</div>
<svg class="a" style="left:411px;top:439px;" width="40" height="40" viewBox="0 0 40 40" fill="none"><defs><linearGradient id="a2" x1="0" y1="0" x2="1" y2="1"><stop offset="0" stop-color="#8fccb2"/><stop offset="1" stop-color="#279877"/></linearGradient>
<clipPath id="ca2"><circle cx="20" cy="20" r="20"/></clipPath></defs>
<circle cx="20" cy="20" r="20" fill="url(#a2)"/>
<g clip-path="url(#ca2)">
<path d="M5.5 42 C6.5 35.5 11 33.6 16.5 33.2 L23.5 33.2 C29 33.6 33.5 35.5 34.5 42Z" fill="#b8393c"/>
<rect x="16.6" y="25" width="6.8" height="11.6" rx="2" fill="#f3bb86"/>
<ellipse cx="11.4" cy="20.8" rx="1.9" ry="2.7" fill="#eeb07a"/><ellipse cx="28.6" cy="20.8" rx="1.9" ry="2.7" fill="#eeb07a"/>
<path d="M12 12.5 C12 8.5 15.5 7 20 7 C24.5 7 28 8.5 28 12.5 L28 22.5 C28 27.8 24.5 30.8 20 30.8 C15.5 30.8 12 27.8 12 22.5 Z" fill="#f7c38d"/>
<path d="M11.8 19.5 C11.8 28.5 15 32.2 20 32.2 C25 32.2 28.2 28.5 28.2 19.5 C27.4 22.8 25.8 24 23.6 24 L16.4 24 C14.2 24 12.6 22.8 11.8 19.5Z" fill="#2b2540"/><ellipse cx="20" cy="26.6" rx="2.6" ry="1" fill="#f0b27e"/><path d="M11.2 18 C10.4 10 12.6 6 16 5.4 L17 2.6 L18.4 5 L20 2.4 L21.4 4.8 L23 2.6 L23.8 5.4 C27.4 6 29.6 10 28.8 18 C28.4 14.4 27.8 12.6 27 11.8 C22.6 12.2 17.4 12.2 13 11.8 C12.2 12.6 11.6 14.4 11.2 18Z" fill="#2b2540"/><path d="M14.4 16.6 H17.8 M22.2 16.6 H25.6" stroke="#2b2540" stroke-width="1" stroke-linecap="round"/><circle cx="16.2" cy="19.4" r="1.05" fill="#2d2a45"/><circle cx="23.8" cy="19.4" r="1.05" fill="#2d2a45"/></g></svg>
<div class="t" style="left:459.4px;top:440.59px;font-size:14.6px;line-height:14.6px;font-weight:400;color:#222;letter-spacing:0.5px;">Salma Mahmoud</div>
<div class="t" style="left:459.4px;top:463.30px;font-size:13px;line-height:13px;font-weight:400;color:#6c7480;letter-spacing:0.2px;">Edit</div>
<div class="a" style="left:490px;top:463px;width:1px;height:12px;background:#dcdcdc"></div>
<div class="t" style="left:497.6px;top:463.30px;font-size:13px;line-height:13px;font-weight:400;color:#e0414f;letter-spacing:0.8px;">Move To Trash</div>
<div class="t" style="left:734.3px;top:450.64px;font-size:15px;line-height:15px;font-weight:400;color:#444;letter-spacing:0.37px;">salma.mahmoud@example.com</div>
<div class="a" style="left:1118px;top:449px;width:38px;height:19px;background:#f0f0ef;border:1px solid #dcdcdc;border-radius:10px"></div>
<div class="a" style="left:1140px;top:452px;width:13px;height:13px;background:#222;border-radius:50%"></div>
<div class="a" style="left:1241px;top:449px;width:38px;height:19px;background:#f0f0ef;border:1px solid #dcdcdc;border-radius:10px"></div>
<div class="a" style="left:1263px;top:452px;width:13px;height:13px;background:#222;border-radius:50%"></div>
<div class="t" style="left:1380.5px;top:450.70px;font-size:15.3px;line-height:15.3px;font-weight:400;color:#333;letter-spacing:0.52px;">2025-01-28 08:52:20</div>
<div class="a" style="left:1660px;top:444px;width:30px;height:30px;background:#e1e2e4;border-radius:5px"></div>
<svg class="a" style="left:1668px;top:453px;" width="14" height="12" viewBox="0 0 14 12" fill="none"><ellipse cx="7" cy="6" rx="6.3" ry="5" stroke="#1e1e2a" stroke-width="1.5"/><circle cx="7" cy="6" r="2.1" stroke="#1e1e2a" stroke-width="1.5"/></svg>
<div class="a" style="left:1698px;top:444px;width:30px;height:30px;background:#e1e2e4;border-radius:5px"></div>
<svg class="a" style="left:1707px;top:453px;" width="12" height="13" viewBox="0 0 12 13" fill="none"><path d="M3.4 0.8 H11.2 V12.2 H0.8 V3.4 Z" stroke="#1e1e2a" stroke-width="1.35" stroke-linejoin="round"/><path d="M3.4 0.8 V3.4 H0.8" fill="#1e1e2a" stroke="#1e1e2a" stroke-width="1"/></svg>
<div class="a" style="left:291px;top:520px;width:18px;height:18px;border:1px solid #dfe2e6;border-radius:4px;background:#fff"></div>
<div class="t" style="left:336.4px;top:521.44px;font-size:15px;line-height:15px;font-weight:400;color:#333;letter-spacing:0.4px;">54</div>
<svg class="a" style="left:411px;top:509px;" width="40" height="40" viewBox="0 0 40 40" fill="none"><defs><linearGradient id="a3" x1="0" y1="0" x2="1" y2="1"><stop offset="0" stop-color="#8fccb2"/><stop offset="1" stop-color="#279877"/></linearGradient>
<clipPath id="ca3"><circle cx="20" cy="20" r="20"/></clipPath></defs>
<circle cx="20" cy="20" r="20" fill="url(#a3)"/>
<g clip-path="url(#ca3)">
<path d="M5.5 42 C6.5 35.5 11 33.6 16.5 33.2 L23.5 33.2 C29 33.6 33.5 35.5 34.5 42Z" fill="#2c7a7a"/>
<rect x="16.6" y="25" width="6.8" height="11.6" rx="2" fill="#f3bb86"/>
<ellipse cx="11.4" cy="20.8" rx="1.9" ry="2.7" fill="#eeb07a"/><ellipse cx="28.6" cy="20.8" rx="1.9" ry="2.7" fill="#eeb07a"/>
<path d="M12 12.5 C12 8.5 15.5 7 20 7 C24.5 7 28 8.5 28 12.5 L28 22.5 C28 27.8 24.5 30.8 20 30.8 C15.5 30.8 12 27.8 12 22.5 Z" fill="#f7c38d"/>
<path d="M11.8 19.5 C11.8 28.5 15 32.2 20 32.2 C25 32.2 28.2 28.5 28.2 19.5 C27.4 22.8 25.8 24 23.6 24 L16.4 24 C14.2 24 12.6 22.8 11.8 19.5Z" fill="#2b2540"/><ellipse cx="20" cy="26.6" rx="2.6" ry="1" fill="#f0b27e"/><path d="M10.8 18.2 C9.8 9 12.6 4 19.6 3.6 C27.2 3.4 30.4 8.4 29.2 18.2 C28.6 14.4 27.8 12.4 26.8 11.6 C22.6 12.2 17.4 12.2 13.2 11.6 C12.2 12.4 11.4 14.4 10.8 18.2Z" fill="#2b2540"/><path d="M14.4 16.6 H17.8 M22.2 16.6 H25.6" stroke="#2b2540" stroke-width="1" stroke-linecap="round"/><circle cx="16.2" cy="19.4" r="1.05" fill="#2d2a45"/><circle cx="23.8" cy="19.4" r="1.05" fill="#2d2a45"/><g stroke="#3a3048" stroke-width="1.2" fill="none"><rect x="12.4" y="16.4" width="6.8" height="5.8" rx="1.6"/><rect x="20.8" y="16.4" width="6.8" height="5.8" rx="1.6"/><path d="M19.2 18H20.8M11 17.4H12.4M27.6 17.4H29"/></g></g></svg>
<div class="t" style="left:459.4px;top:510.59px;font-size:14.6px;line-height:14.6px;font-weight:400;color:#222;letter-spacing:0.5px;">Riyan Prasetyo</div>
<div class="t" style="left:459.4px;top:533.30px;font-size:13px;line-height:13px;font-weight:400;color:#6c7480;letter-spacing:0.2px;">Edit</div>
<div class="a" style="left:490px;top:533px;width:1px;height:12px;background:#dcdcdc"></div>
<div class="t" style="left:497.6px;top:533.30px;font-size:13px;line-height:13px;font-weight:400;color:#e0414f;letter-spacing:0.8px;">Move To Trash</div>
<div class="t" style="left:734.3px;top:520.64px;font-size:15px;line-height:15px;font-weight:400;color:#444;letter-spacing:0.37px;">riyan.prasetyo@example.com</div>
<div class="a" style="left:1118px;top:519px;width:38px;height:19px;background:#f0f0ef;border:1px solid #dcdcdc;border-radius:10px"></div>
<div class="a" style="left:1140px;top:522px;width:13px;height:13px;background:#222;border-radius:50%"></div>
<div class="a" style="left:1241px;top:519px;width:38px;height:19px;background:#f0f0ef;border:1px solid #dcdcdc;border-radius:10px"></div>
<div class="a" style="left:1263px;top:522px;width:13px;height:13px;background:#222;border-radius:50%"></div>
<div class="t" style="left:1380.5px;top:520.70px;font-size:15.3px;line-height:15.3px;font-weight:400;color:#333;letter-spacing:0.52px;">2025-01-28 08:40:33</div>
<div class="a" style="left:1660px;top:514px;width:30px;height:30px;background:#e1e2e4;border-radius:5px"></div>
<svg class="a" style="left:1668px;top:523px;" width="14" height="12" viewBox="0 0 14 12" fill="none"><ellipse cx="7" cy="6" rx="6.3" ry="5" stroke="#1e1e2a" stroke-width="1.5"/><circle cx="7" cy="6" r="2.1" stroke="#1e1e2a" stroke-width="1.5"/></svg>
<div class="a" style="left:1698px;top:514px;width:30px;height:30px;background:#e1e2e4;border-radius:5px"></div>
<svg class="a" style="left:1707px;top:523px;" width="12" height="13" viewBox="0 0 12 13" fill="none"><path d="M3.4 0.8 H11.2 V12.2 H0.8 V3.4 Z" stroke="#1e1e2a" stroke-width="1.35" stroke-linejoin="round"/><path d="M3.4 0.8 V3.4 H0.8" fill="#1e1e2a" stroke="#1e1e2a" stroke-width="1"/></svg>
<div class="a" style="left:278px;top:564px;width:1515px;height:70px;background:#f5f7f7"></div>
<div class="a" style="left:291px;top:590px;width:18px;height:18px;border:1px solid #dfe2e6;border-radius:4px;background:#fff"></div>
<div class="t" style="left:336.4px;top:591.44px;font-size:15px;line-height:15px;font-weight:400;color:#333;letter-spacing:0.4px;">36</div>
<svg class="a" style="left:411px;top:579px;" width="40" height="40" viewBox="0 0 40 40" fill="none"><defs><linearGradient id="a4" x1="0" y1="0" x2="1" y2="1"><stop offset="0" stop-color="#8fccb2"/><stop offset="1" stop-color="#279877"/></linearGradient>
<clipPath id="ca4"><circle cx="20" cy="20" r="20"/></clipPath></defs>
<circle cx="20" cy="20" r="20" fill="url(#a4)"/>
<g clip-path="url(#ca4)">
<path d="M5.5 42 C6.5 35.5 11 33.6 16.5 33.2 L23.5 33.2 C29 33.6 33.5 35.5 34.5 42Z" fill="#2c6e7a"/>
<rect x="16.6" y="25" width="6.8" height="11.6" rx="2" fill="#f3bb86"/>
<ellipse cx="11.4" cy="20.8" rx="1.9" ry="2.7" fill="#eeb07a"/><ellipse cx="28.6" cy="20.8" rx="1.9" ry="2.7" fill="#eeb07a"/>
<path d="M12 12.5 C12 8.5 15.5 7 20 7 C24.5 7 28 8.5 28 12.5 L28 22.5 C28 27.8 24.5 30.8 20 30.8 C15.5 30.8 12 27.8 12 22.5 Z" fill="#f7c38d"/>
<path d="M11.8 19.5 C11.8 28.5 15 32.2 20 32.2 C25 32.2 28.2 28.5 28.2 19.5 C27.4 22.8 25.8 24 23.6 24 L16.4 24 C14.2 24 12.6 22.8 11.8 19.5Z" fill="#c24a3a"/><ellipse cx="20" cy="26.6" rx="2.6" ry="1" fill="#f0b27e"/><path d="M10.8 18.2 C9.8 9 12.6 4 19.6 3.6 C27.2 3.4 30.4 8.4 29.2 18.2 C28.6 14.4 27.8 12.4 26.8 11.6 C22.6 12.2 17.4 12.2 13.2 11.6 C12.2 12.4 11.4 14.4 10.8 18.2Z" fill="#c9483a"/><path d="M14.4 16.6 H17.8 M22.2 16.6 H25.6" stroke="#c9483a" stroke-width="1" stroke-linecap="round"/><circle cx="16.2" cy="19.4" r="1.05" fill="#2d2a45"/><circle cx="23.8" cy="19.4" r="1.05" fill="#2d2a45"/><g stroke="#3a3048" stroke-width="1.2" fill="none"><rect x="12.4" y="16.4" width="6.8" height="5.8" rx="1.6"/><rect x="20.8" y="16.4" width="6.8" height="5.8" rx="1.6"/><path d="M19.2 18H20.8M11 17.4H12.4M27.6 17.4H29"/></g></g></svg>
<div class="t" style="left:459.4px;top:580.59px;font-size:14.6px;line-height:14.6px;font-weight:400;color:#222;letter-spacing:0.5px;">Rayon Scarl</div>
<div class="t" style="left:459.4px;top:603.30px;font-size:13px;line-height:13px;font-weight:400;color:#6c7480;letter-spacing:0.2px;">Edit</div>
<div class="a" style="left:490px;top:603px;width:1px;height:12px;background:#dcdcdc"></div>
<div class="t" style="left:497.6px;top:603.30px;font-size:13px;line-height:13px;font-weight:400;color:#e0414f;letter-spacing:0.8px;">Move To Trash</div>
<div class="t" style="left:734.3px;top:590.64px;font-size:15px;line-height:15px;font-weight:400;color:#444;letter-spacing:0.37px;">raj.kumar@example.com</div>
<div class="a" style="left:1118px;top:589px;width:38px;height:19px;background:#f0f0ef;border:1px solid #dcdcdc;border-radius:10px"></div>
<div class="a" style="left:1140px;top:592px;width:13px;height:13px;background:#222;border-radius:50%"></div>
<div class="a" style="left:1241px;top:589px;width:38px;height:19px;background:#f0f0ef;border:1px solid #dcdcdc;border-radius:10px"></div>
<div class="a" style="left:1263px;top:592px;width:13px;height:13px;background:#222;border-radius:50%"></div>
<div class="t" style="left:1380.5px;top:590.70px;font-size:15.3px;line-height:15.3px;font-weight:400;color:#333;letter-spacing:0.52px;">2025-01-23 07:53:49</div>
<div class="a" style="left:1660px;top:584px;width:30px;height:30px;background:#e1e2e4;border-radius:5px"></div>
<svg class="a" style="left:1668px;top:593px;" width="14" height="12" viewBox="0 0 14 12" fill="none"><ellipse cx="7" cy="6" rx="6.3" ry="5" stroke="#1e1e2a" stroke-width="1.5"/><circle cx="7" cy="6" r="2.1" stroke="#1e1e2a" stroke-width="1.5"/></svg>
<div class="a" style="left:1698px;top:584px;width:30px;height:30px;background:#e1e2e4;border-radius:5px"></div>
<svg class="a" style="left:1707px;top:593px;" width="12" height="13" viewBox="0 0 12 13" fill="none"><path d="M3.4 0.8 H11.2 V12.2 H0.8 V3.4 Z" stroke="#1e1e2a" stroke-width="1.35" stroke-linejoin="round"/><path d="M3.4 0.8 V3.4 H0.8" fill="#1e1e2a" stroke="#1e1e2a" stroke-width="1"/></svg>
<div class="a" style="left:291px;top:660px;width:18px;height:18px;border:1px solid #dfe2e6;border-radius:4px;background:#fff"></div>
<div class="t" style="left:336.4px;top:661.44px;font-size:15px;line-height:15px;font-weight:400;color:#333;letter-spacing:0.4px;">35</div>
<svg class="a" style="left:411px;top:649px;" width="40" height="40" viewBox="0 0 40 40" fill="none"><defs><linearGradient id="a5" x1="0" y1="0" x2="1" y2="1"><stop offset="0" stop-color="#8fccb2"/><stop offset="1" stop-color="#279877"/></linearGradient>
<clipPath id="ca5"><circle cx="20" cy="20" r="20"/></clipPath></defs>
<circle cx="20" cy="20" r="20" fill="url(#a5)"/>
<g clip-path="url(#ca5)">
<path d="M5.5 42 C6.5 35.5 11 33.6 16.5 33.2 L23.5 33.2 C29 33.6 33.5 35.5 34.5 42Z" fill="#2c7a7a"/>
<rect x="16.6" y="25" width="6.8" height="11.6" rx="2" fill="#f3bb86"/>
<ellipse cx="11.4" cy="20.8" rx="1.9" ry="2.7" fill="#eeb07a"/><ellipse cx="28.6" cy="20.8" rx="1.9" ry="2.7" fill="#eeb07a"/>
<path d="M12 12.5 C12 8.5 15.5 7 20 7 C24.5 7 28 8.5 28 12.5 L28 22.5 C28 27.8 24.5 30.8 20 30.8 C15.5 30.8 12 27.8 12 22.5 Z" fill="#f7c38d"/>
<path d="M11.8 19.5 C11.8 28.5 15 32.2 20 32.2 C25 32.2 28.2 28.5 28.2 19.5 C27.4 22.8 25.8 24 23.6 24 L16.4 24 C14.2 24 12.6 22.8 11.8 19.5Z" fill="#3a2a48"/><ellipse cx="20" cy="26.6" rx="2.6" ry="1" fill="#f0b27e"/><path d="M10.8 18.2 C9.8 9 12.6 4 19.6 3.6 C27.2 3.4 30.4 8.4 29.2 18.2 C28.6 14.4 27.8 12.4 26.8 11.6 C22.6 12.2 17.4 12.2 13.2 11.6 C12.2 12.4 11.4 14.4 10.8 18.2Z" fill="#3a2a48"/><path d="M14.4 16.6 H17.8 M22.2 16.6 H25.6" stroke="#3a2a48" stroke-width="1" stroke-linecap="round"/><circle cx="16.2" cy="19.4" r="1.05" fill="#2d2a45"/><circle cx="23.8" cy="19.4" r="1.05" fill="#2d2a45"/></g></svg>
<div class="t" style="left:459.4px;top:650.59px;font-size:14.6px;line-height:14.6px;font-weight:400;color:#222;letter-spacing:0.5px;">Matthew Martinez</div>
<div class="t" style="left:459.4px;top:673.30px;font-size:13px;line-height:13px;font-weight:400;color:#6c7480;letter-spacing:0.2px;">Edit</div>
<div class="a" style="left:490px;top:673px;width:1px;height:12px;background:#dcdcdc"></div>
<div class="t" style="left:497.6px;top:673.30px;font-size:13px;line-height:13px;font-weight:400;color:#e0414f;letter-spacing:0.8px;">Move To Trash</div>
<div class="t" style="left:734.3px;top:660.64px;font-size:15px;line-height:15px;font-weight:400;color:#444;letter-spacing:0.37px;">matthew.driver@example.com</div>
<div class="a" style="left:1118px;top:659px;width:38px;height:19px;background:#f0f0ef;border:1px solid #dcdcdc;border-radius:10px"></div>
<div class="a" style="left:1140px;top:662px;width:13px;height:13px;background:#222;border-radius:50%"></div>
<div class="a" style="left:1241px;top:659px;width:38px;height:19px;background:#f0f0ef;border:1px solid #dcdcdc;border-radius:10px"></div>
<div class="a" style="left:1263px;top:662px;width:13px;height:13px;background:#222;border-radius:50%"></div>
<div class="t" style="left:1380.5px;top:660.70px;font-size:15.3px;line-height:15.3px;font-weight:400;color:#333;letter-spacing:0.52px;">2025-01-23 07:50:23</div>
<div class="a" style="left:1660px;top:654px;width:30px;height:30px;background:#e1e2e4;border-radius:5px"></div>
<svg class="a" style="left:1668px;top:663px;" width="14" height="12" viewBox="0 0 14 12" fill="none"><ellipse cx="7" cy="6" rx="6.3" ry="5" stroke="#1e1e2a" stroke-width="1.5"/><circle cx="7" cy="6" r="2.1" stroke="#1e1e2a" stroke-width="1.5"/></svg>
<div class="a" style="left:1698px;top:654px;width:30px;height:30px;background:#e1e2e4;border-radius:5px"></div>
<svg class="a" style="left:1707px;top:663px;" width="12" height="13" viewBox="0 0 12 13" fill="none"><path d="M3.4 0.8 H11.2 V12.2 H0.8 V3.4 Z" stroke="#1e1e2a" stroke-width="1.35" stroke-linejoin="round"/><path d="M3.4 0.8 V3.4 H0.8" fill="#1e1e2a" stroke="#1e1e2a" stroke-width="1"/></svg>
<div class="a" style="left:278px;top:704px;width:1515px;height:70px;background:#f5f7f7"></div>
<div class="a" style="left:291px;top:730px;width:18px;height:18px;border:1px solid #dfe2e6;border-radius:4px;background:#fff"></div>
<div class="t" style="left:336.4px;top:731.44px;font-size:15px;line-height:15px;font-weight:400;color:#333;letter-spacing:0.4px;">34</div>
<svg class="a" style="left:411px;top:719px;" width="40" height="40" viewBox="0 0 40 40" fill="none"><defs><linearGradient id="a6" x1="0" y1="0" x2="1" y2="1"><stop offset="0" stop-color="#8fccb2"/><stop offset="1" stop-color="#279877"/></linearGradient>
<clipPath id="ca6"><circle cx="20" cy="20" r="20"/></clipPath></defs>
<circle cx="20" cy="20" r="20" fill="url(#a6)"/>
<g clip-path="url(#ca6)">
<path d="M5.5 42 C6.5 35.5 11 33.6 16.5 33.2 L23.5 33.2 C29 33.6 33.5 35.5 34.5 42Z" fill="#2e6f8a"/>
<rect x="16.6" y="25" width="6.8" height="11.6" rx="2" fill="#f3bb86"/>
<ellipse cx="11.4" cy="20.8" rx="1.9" ry="2.7" fill="#eeb07a"/><ellipse cx="28.6" cy="20.8" rx="1.9" ry="2.7" fill="#eeb07a"/>
<path d="M12 12.5 C12 8.5 15.5 7 20 7 C24.5 7 28 8.5 28 12.5 L28 22.5 C28 27.8 24.5 30.8 20 30.8 C15.5 30.8 12 27.8 12 22.5 Z" fill="#f7c38d"/>
<path d="M18.4 26.4 H21.6" stroke="#8a5a48" stroke-width="0.9"/><path d="M10.8 18.2 C9.8 9 12.6 4 19.6 3.6 C27.2 3.4 30.4 8.4 29.2 18.2 C28.6 14.4 27.8 12.4 26.8 11.6 C22.6 12.2 17.4 12.2 13.2 11.6 C12.2 12.4 11.4 14.4 10.8 18.2Z" fill="#d9573a"/><path d="M14.4 16.6 H17.8 M22.2 16.6 H25.6" stroke="#d9573a" stroke-width="1" stroke-linecap="round"/><circle cx="16.2" cy="19.4" r="1.05" fill="#2d2a45"/><circle cx="23.8" cy="19.4" r="1.05" fill="#2d2a45"/><g stroke="#3a3048" stroke-width="1.2" fill="none"><rect x="12.4" y="16.4" width="6.8" height="5.8" rx="1.6"/><rect x="20.8" y="16.4" width="6.8" height="5.8" rx="1.6"/><path d="M19.2 18H20.8M11 17.4H12.4M27.6 17.4H29"/></g></g></svg>
<div class="t" style="left:459.4px;top:720.59px;font-size:14.6px;line-height:14.6px;font-weight:400;color:#222;letter-spacing:0.5px;">Samuel Thompson</div>
<div class="t" style="left:459.4px;top:743.30px;font-size:13px;line-height:13px;font-weight:400;color:#6c7480;letter-spacing:0.2px;">Edit</div>
<div class="a" style="left:490px;top:743px;width:1px;height:12px;background:#dcdcdc"></div>
<div class="t" style="left:497.6px;top:743.30px;font-size:13px;line-height:13px;font-weight:400;color:#e0414f;letter-spacing:0.8px;">Move To Trash</div>
<div class="t" style="left:734.3px;top:730.64px;font-size:15px;line-height:15px;font-weight:400;color:#444;letter-spacing:0.37px;">samuel.driver@example.com</div>
<div class="a" style="left:1118px;top:729px;width:38px;height:19px;background:#f0f0ef;border:1px solid #dcdcdc;border-radius:10px"></div>
<div class="a" style="left:1140px;top:732px;width:13px;height:13px;background:#222;border-radius:50%"></div>
<div class="a" style="left:1241px;top:729px;width:38px;height:19px;background:#f0f0ef;border:1px solid #dcdcdc;border-radius:10px"></div>
<div class="a" style="left:1263px;top:732px;width:13px;height:13px;background:#222;border-radius:50%"></div>
<div class="t" style="left:1380.5px;top:730.70px;font-size:15.3px;line-height:15.3px;font-weight:400;color:#333;letter-spacing:0.52px;">2025-01-23 07:46:34</div>
<div class="a" style="left:1660px;top:724px;width:30px;height:30px;background:#e1e2e4;border-radius:5px"></div>
<svg class="a" style="left:1668px;top:733px;" width="14" height="12" viewBox="0 0 14 12" fill="none"><ellipse cx="7" cy="6" rx="6.3" ry="5" stroke="#1e1e2a" stroke-width="1.5"/><circle cx="7" cy="6" r="2.1" stroke="#1e1e2a" stroke-width="1.5"/></svg>
<div class="a" style="left:1698px;top:724px;width:30px;height:30px;background:#e1e2e4;border-radius:5px"></div>
<svg class="a" style="left:1707px;top:733px;" width="12" height="13" viewBox="0 0 12 13" fill="none"><path d="M3.4 0.8 H11.2 V12.2 H0.8 V3.4 Z" stroke="#1e1e2a" stroke-width="1.35" stroke-linejoin="round"/><path d="M3.4 0.8 V3.4 H0.8" fill="#1e1e2a" stroke="#1e1e2a" stroke-width="1"/></svg>
<div class="a" style="left:291px;top:800px;width:18px;height:18px;border:1px solid #dfe2e6;border-radius:4px;background:#fff"></div>
<div class="t" style="left:336.4px;top:801.44px;font-size:15px;line-height:15px;font-weight:400;color:#333;letter-spacing:0.4px;">33</div>
<svg class="a" style="left:411px;top:789px;" width="40" height="40" viewBox="0 0 40 40" fill="none"><defs><linearGradient id="a7" x1="0" y1="0" x2="1" y2="1"><stop offset="0" stop-color="#8fccb2"/><stop offset="1" stop-color="#279877"/></linearGradient>
<clipPath id="ca7"><circle cx="20" cy="20" r="20"/></clipPath></defs>
<circle cx="20" cy="20" r="20" fill="url(#a7)"/>
<g clip-path="url(#ca7)">
<path d="M5.5 42 C6.5 35.5 11 33.6 16.5 33.2 L23.5 33.2 C29 33.6 33.5 35.5 34.5 42Z" fill="#d4583a"/>
<rect x="16.6" y="25" width="6.8" height="11.6" rx="2" fill="#f3bb86"/>
<ellipse cx="11.4" cy="20.8" rx="1.9" ry="2.7" fill="#eeb07a"/><ellipse cx="28.6" cy="20.8" rx="1.9" ry="2.7" fill="#eeb07a"/>
<path d="M12 12.5 C12 8.5 15.5 7 20 7 C24.5 7 28 8.5 28 12.5 L28 22.5 C28 27.8 24.5 30.8 20 30.8 C15.5 30.8 12 27.8 12 22.5 Z" fill="#f7c38d"/>
<path d="M11.8 19.5 C11.8 28.5 15 32.2 20 32.2 C25 32.2 28.2 28.5 28.2 19.5 C27.4 22.8 25.8 24 23.6 24 L16.4 24 C14.2 24 12.6 22.8 11.8 19.5Z" fill="#2b2540"/><ellipse cx="20" cy="26.6" rx="2.6" ry="1" fill="#f0b27e"/><path d="M10.8 18.2 C9.8 9 12.6 4 19.6 3.6 C27.2 3.4 30.4 8.4 29.2 18.2 C28.6 14.4 27.8 12.4 26.8 11.6 C22.6 12.2 17.4 12.2 13.2 11.6 C12.2 12.4 11.4 14.4 10.8 18.2Z" fill="#2b2540"/><path d="M14.4 16.6 H17.8 M22.2 16.6 H25.6" stroke="#2b2540" stroke-width="1" stroke-linecap="round"/><circle cx="16.2" cy="19.4" r="1.05" fill="#2d2a45"/><circle cx="23.8" cy="19.4" r="1.05" fill="#2d2a45"/><g stroke="#3a3048" stroke-width="1.2" fill="none"><rect x="12.4" y="16.4" width="6.8" height="5.8" rx="1.6"/><rect x="20.8" y="16.4" width="6.8" height="5.8" rx="1.6"/><path d="M19.2 18H20.8M11 17.4H12.4M27.6 17.4H29"/></g></g></svg>
<div class="t" style="left:459.4px;top:790.59px;font-size:14.6px;line-height:14.6px;font-weight:400;color:#222;letter-spacing:0.5px;">Daniel Scott</div>
<div class="t" style="left:459.4px;top:813.30px;font-size:13px;line-height:13px;font-weight:400;color:#6c7480;letter-spacing:0.2px;">Edit</div>
<div class="a" style="left:490px;top:813px;width:1px;height:12px;background:#dcdcdc"></div>
<div class="t" style="left:497.6px;top:813.30px;font-size:13px;line-height:13px;font-weight:400;color:#e0414f;letter-spacing:0.8px;">Move To Trash</div>
<div class="t" style="left:734.3px;top:800.64px;font-size:15px;line-height:15px;font-weight:400;color:#444;letter-spacing:0.37px;">danielst.driver@example.com</div>
<div class="a" style="left:1118px;top:799px;width:38px;height:19px;background:#f0f0ef;border:1px solid #dcdcdc;border-radius:10px"></div>
<div class="a" style="left:1140px;top:802px;width:13px;height:13px;background:#222;border-radius:50%"></div>
<div class="a" style="left:1241px;top:799px;width:38px;height:19px;background:#f0f0ef;border:1px solid #dcdcdc;border-radius:10px"></div>
<div class="a" style="left:1263px;top:802px;width:13px;height:13px;background:#222;border-radius:50%"></div>
<div class="t" style="left:1380.5px;top:800.70px;font-size:15.3px;line-height:15.3px;font-weight:400;color:#333;letter-spacing:0.52px;">2025-01-23 07:41:55</div>
<div class="a" style="left:1660px;top:794px;width:30px;height:30px;background:#e1e2e4;border-radius:5px"></div>
<svg class="a" style="left:1668px;top:803px;" width="14" height="12" viewBox="0 0 14 12" fill="none"><ellipse cx="7" cy="6" rx="6.3" ry="5" stroke="#1e1e2a" stroke-width="1.5"/><circle cx="7" cy="6" r="2.1" stroke="#1e1e2a" stroke-width="1.5"/></svg>
<div class="a" style="left:1698px;top:794px;width:30px;height:30px;background:#e1e2e4;border-radius:5px"></div>
<svg class="a" style="left:1707px;top:803px;" width="12" height="13" viewBox="0 0 12 13" fill="none"><path d="M3.4 0.8 H11.2 V12.2 H0.8 V3.4 Z" stroke="#1e1e2a" stroke-width="1.35" stroke-linejoin="round"/><path d="M3.4 0.8 V3.4 H0.8" fill="#1e1e2a" stroke="#1e1e2a" stroke-width="1"/></svg>
<div class="a" style="left:278px;top:844px;width:1515px;height:70px;background:#f5f7f7"></div>
<div class="a" style="left:291px;top:870px;width:18px;height:18px;border:1px solid #dfe2e6;border-radius:4px;background:#fff"></div>
<div class="t" style="left:336.4px;top:871.44px;font-size:15px;line-height:15px;font-weight:400;color:#333;letter-spacing:0.4px;">32</div>
<svg class="a" style="left:411px;top:859px;" width="40" height="40" viewBox="0 0 40 40" fill="none"><defs><linearGradient id="a8" x1="0" y1="0" x2="1" y2="1"><stop offset="0" stop-color="#8fccb2"/><stop offset="1" stop-color="#279877"/></linearGradient>
<clipPath id="ca8"><circle cx="20" cy="20" r="20"/></clipPath></defs>
<circle cx="20" cy="20" r="20" fill="url(#a8)"/>
<g clip-path="url(#ca8)">
<path d="M5.5 42 C6.5 35.5 11 33.6 16.5 33.2 L23.5 33.2 C29 33.6 33.5 35.5 34.5 42Z" fill="#e0a820"/>
<rect x="16.6" y="25" width="6.8" height="11.6" rx="2" fill="#f3bb86"/>
<ellipse cx="11.4" cy="20.8" rx="1.9" ry="2.7" fill="#eeb07a"/><ellipse cx="28.6" cy="20.8" rx="1.9" ry="2.7" fill="#eeb07a"/>
<path d="M12 12.5 C12 8.5 15.5 7 20 7 C24.5 7 28 8.5 28 12.5 L28 22.5 C28 27.8 24.5 30.8 20 30.8 C15.5 30.8 12 27.8 12 22.5 Z" fill="#f7c38d"/>
<path d="M11.8 19.5 C11.8 28.5 15 32.2 20 32.2 C25 32.2 28.2 28.5 28.2 19.5 C27.4 22.8 25.8 24 23.6 24 L16.4 24 C14.2 24 12.6 22.8 11.8 19.5Z" fill="#2b2540"/><ellipse cx="20" cy="26.6" rx="2.6" ry="1" fill="#f0b27e"/><path d="M10.8 18.2 C9.8 9 12.6 4 19.6 3.6 C27.2 3.4 30.4 8.4 29.2 18.2 C28.6 14.4 27.8 12.4 26.8 11.6 C22.6 12.2 17.4 12.2 13.2 11.6 C12.2 12.4 11.4 14.4 10.8 18.2Z" fill="#2b2540"/><path d="M14.4 16.6 H17.8 M22.2 16.6 H25.6" stroke="#2b2540" stroke-width="1" stroke-linecap="round"/><circle cx="16.2" cy="19.4" r="1.05" fill="#2d2a45"/><circle cx="23.8" cy="19.4" r="1.05" fill="#2d2a45"/><g stroke="#3a3048" stroke-width="1.2" fill="none"><rect x="12.4" y="16.4" width="6.8" height="5.8" rx="1.6"/><rect x="20.8" y="16.4" width="6.8" height="5.8" rx="1.6"/><path d="M19.2 18H20.8M11 17.4H12.4M27.6 17.4H29"/></g></g></svg>
<div class="t" style="left:459.4px;top:860.59px;font-size:14.6px;line-height:14.6px;font-weight:400;color:#222;letter-spacing:0.5px;">Alex Jones</div>
<div class="t" style="left:459.4px;top:883.30px;font-size:13px;line-height:13px;font-weight:400;color:#6c7480;letter-spacing:0.2px;">Edit</div>
<div class="a" style="left:490px;top:883px;width:1px;height:12px;background:#dcdcdc"></div>
<div class="t" style="left:497.6px;top:883.30px;font-size:13px;line-height:13px;font-weight:400;color:#e0414f;letter-spacing:0.8px;">Move To Trash</div>
<div class="t" style="left:734.3px;top:870.64px;font-size:15px;line-height:15px;font-weight:400;color:#444;letter-spacing:0.37px;">alex.driver@example.com</div>
<div class="a" style="left:1118px;top:869px;width:38px;height:19px;background:#f0f0ef;border:1px solid #dcdcdc;border-radius:10px"></div>
<div class="a" style="left:1140px;top:872px;width:13px;height:13px;background:#222;border-radius:50%"></div>
<div class="a" style="left:1241px;top:869px;width:38px;height:19px;background:#f0f0ef;border:1px solid #dcdcdc;border-radius:10px"></div>
<div class="a" style="left:1263px;top:872px;width:13px;height:13px;background:#222;border-radius:50%"></div>
<div class="t" style="left:1380.5px;top:870.70px;font-size:15.3px;line-height:15.3px;font-weight:400;color:#333;letter-spacing:0.52px;">2025-01-23 07:38:48</div>
<div class="a" style="left:1660px;top:864px;width:30px;height:30px;background:#e1e2e4;border-radius:5px"></div>
<svg class="a" style="left:1668px;top:873px;" width="14" height="12" viewBox="0 0 14 12" fill="none"><ellipse cx="7" cy="6" rx="6.3" ry="5" stroke="#1e1e2a" stroke-width="1.5"/><circle cx="7" cy="6" r="2.1" stroke="#1e1e2a" stroke-width="1.5"/></svg>
<div class="a" style="left:1698px;top:864px;width:30px;height:30px;background:#e1e2e4;border-radius:5px"></div>
<svg class="a" style="left:1707px;top:873px;" width="12" height="13" viewBox="0 0 12 13" fill="none"><path d="M3.4 0.8 H11.2 V12.2 H0.8 V3.4 Z" stroke="#1e1e2a" stroke-width="1.35" stroke-linejoin="round"/><path d="M3.4 0.8 V3.4 H0.8" fill="#1e1e2a" stroke="#1e1e2a" stroke-width="1"/></svg>
<div class="a" style="left:242px;top:896px;width:1587px;height:59px;background:#212121"></div>
<div class="t" style="left:268.8px;top:919.69px;font-size:14.6px;line-height:14.6px;font-weight:400;color:#d6d6d6;letter-spacing:0.82px;">Copyright 2025 © GoCab theme by PixelStrap</div>
<div class="a" style="left:1599px;top:916px;width:52px;height:23px;background:#c2c2c2;border-radius:4px"></div>
<div class="t" style="left:1609.3px;top:921.10px;font-size:13px;line-height:13px;font-weight:700;color:#222;letter-spacing:0.3px;">1.0.6</div>
<div class="a" style="left:1669px;top:916px;width:132px;height:23px;background:#c2c2c2;border-radius:4px"></div>
<div class="t" style="left:1679.4px;top:921.10px;font-size:13px;line-height:13px;font-weight:700;color:#222;letter-spacing:0.3px;">Load time: 1.05s.</div>
<div class="a" style="left:1829px;top:0px;width:15px;height:955px;background:#fbfbfb"></div>
<svg class="a" style="left:1831px;top:4px;" width="11" height="6" viewBox="0 0 11 6" fill="none"><path d="M0.5 5.5 L5.5 0.5 L10.5 5.5Z" fill="#8b8b8b"/></svg>
<svg class="a" style="left:1831px;top:947.5px;" width="11" height="6" viewBox="0 0 11 6" fill="none"><path d="M0.5 0.5 H10.5 L5.5 5.5Z" fill="#8b8b8b"/></svg>
<div class="a" style="left:1832px;top:84px;width:9px;height:536px;background:#8b8b8b;border-radius:5px"></div>
</body></html>
